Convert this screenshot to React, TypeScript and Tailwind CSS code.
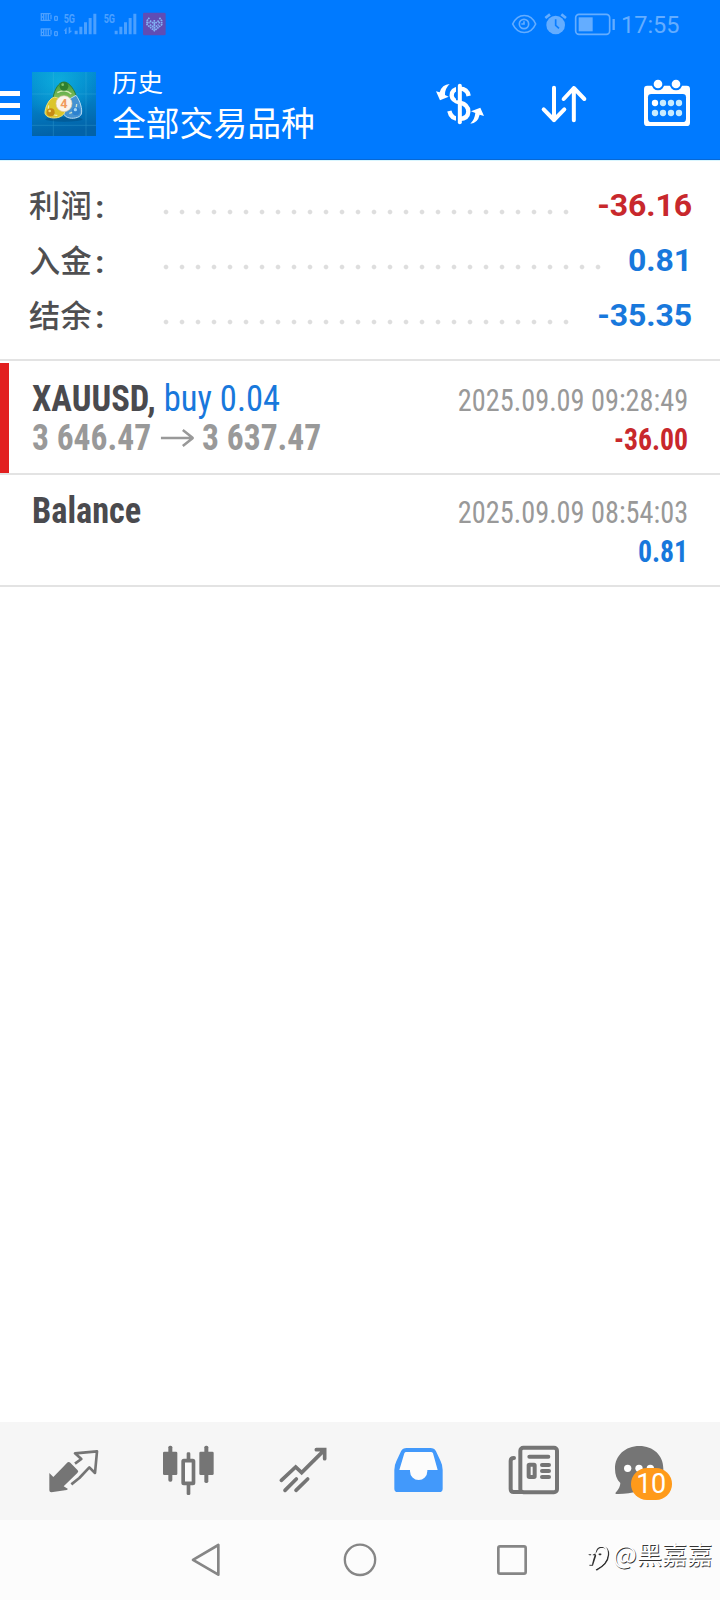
import React from "react";

const COND =
  "font-['Roboto_Condensed','Roboto'] [font-stretch:75%] whitespace-nowrap";

function StatusBar() {
  return (
    <div className="flex h-12 w-full text-[#64adff]">
      <svg className="ml-[36px] h-12 w-[134px]" viewBox="108 0 402 144" fill="currentColor">
        <g opacity=".75">
          {[40, 86].map((y) => (
            <g key={y} fill="none" stroke="currentColor" strokeWidth="4">
              <path d={`M124 ${y + 1}v20M124 ${y + 11}h6M131 ${y + 1}v20M138 ${y + 1}v21M145 ${y + 1}v20M153 ${y + 4}v14`} />
              <path d={`M122 ${y + 1}h30M122 ${y + 21}h30`} />
              <rect x="164" y={y + 9} width="8" height="12" rx="2" />
            </g>
          ))}
          <text x="191" y="69" fontSize="36" fontWeight="700" fontFamily="Roboto" textLength="34" lengthAdjust="spacingAndGlyphs">5G</text>
          <text x="311" y="69" fontSize="36" fontWeight="700" fontFamily="Roboto" textLength="34" lengthAdjust="spacingAndGlyphs">5G</text>
          <path d="M191 92l9-10v20h-5V92zM206 82v20l11-10h-6V82zM224 92h9v11h-9zM238 80h9v23h-9zM252 67h9v36h-9zM266 54h9v49h-9zM280 41h9v62h-9z" />
          <path d="M344 92h9v11h-9zM358 80h9v23h-9zM372 67h9v36h-9zM386 54h9v49h-9zM400 41h9v62h-9z" />
        </g>
        <rect x="429" y="38" width="68" height="68" rx="4" fill="#604db4" />
        <path d="M448 53l-7 9v12l22 18 22-18V62l-7-9M450 62l13 10 13-10M450 74l13 9 13-9M463 60v30M441 68l10 0M475 68h10" fill="none" stroke="#83b4f5" strokeWidth="5" strokeDasharray="5 2" />
      </svg>
      <svg className="ml-auto h-12 w-[109px]" viewBox="30 0 327 144" fill="none" stroke="currentColor" strokeWidth="5">
        <path d="M38 72C54 38 92 38 107 72C92 106 54 106 38 72Z" />
        <circle cx="72" cy="72" r="14" />
        <path d="M72 64v8h-8" />
        <circle cx="167" cy="75" r="28" fill="currentColor" stroke="none" />
        <path d="M167 58v18l10 9" stroke="#0a7dff" />
        <path d="M136 54l14-11M198 54l-14-11" strokeWidth="8" />
        <rect x="227" y="43" width="102" height="60" rx="10" />
        <rect x="236" y="52" width="42" height="42" fill="currentColor" stroke="none" />
        <path d="M341 57v33" strokeWidth="7" />
      </svg>
      <div className="w-[101px] pl-[2px] font-['Roboto'] text-[23.5px] leading-[50px]">17:55</div>
    </div>
  );
}

function AppLogo() {
  return (
    <svg className="ml-3 h-16 w-16" viewBox="96 36 192 192">
      <defs>
        <linearGradient id="sea" x1="0" y1="0" x2=".15" y2="1">
          <stop offset="0" stopColor="#0391d4" />
          <stop offset=".5" stopColor="#0280c6" />
          <stop offset="1" stopColor="#0262a8" />
        </linearGradient>
        <radialGradient id="glow" cx=".42" cy=".15" r=".6">
          <stop offset="0" stopColor="#10b4e0" stopOpacity=".8" />
          <stop offset="1" stopColor="#10b4e0" stopOpacity="0" />
        </radialGradient>
        <linearGradient id="green" x1="0" y1="0" x2="0" y2="1">
          <stop offset="0" stopColor="#3f9a3a" />
          <stop offset="1" stopColor="#a3cf6a" />
        </linearGradient>
      </defs>
      <rect x="96" y="36" width="192" height="192" fill="url(#sea)" />
      <rect x="96" y="36" width="192" height="192" fill="url(#glow)" />
      <path d="M160 36v192M96 102h192M96 196h192M258 36v192" stroke="#5ac4ea" strokeWidth="2" opacity=".35" />
      <ellipse cx="192" cy="178" rx="56" ry="7" fill="#023d66" opacity=".35" />
      <path d="M192 66C208 66 226 92 229 112C228 130 212 138 192 138C172 138 158 126 160 110C163 90 176 66 192 66Z" fill="url(#green)" stroke="#2c7c3c" strokeWidth="3" />
      <path d="M228 106C240 122 248 148 244 162C240 174 216 178 202 172C186 166 184 140 196 124Z" fill="#4593d2" stroke="#b8dcf4" strokeWidth="3" />
      <path d="M164 112C176 112 192 126 196 144C198 160 186 170 172 173C156 176 138 172 135 160C134 144 148 112 164 112Z" fill="#dcc52a" stroke="#efe07a" strokeWidth="3" />
      <path d="M172 98a34 34 0 0 1 42 4M208 160a28 28 0 0 0 22-28M146 136a24 24 0 0 0 26 30" fill="none" stroke="#f0f6d0" strokeWidth="4" opacity=".8" />
      <circle cx="192" cy="79" r="13" fill="#2f7f2e" />
      <circle cx="188" cy="74" r="4" fill="#83c66a" />
      <circle cx="152" cy="157" r="12" fill="#c68a14" />
      <circle cx="149" cy="153" r="4" fill="#f6dc70" />
      <circle cx="228" cy="154" r="12" fill="#2c82cf" />
      <circle cx="226" cy="149" r="5" fill="#a5d8f8" />
      <circle cx="192" cy="131" r="24" fill="#fbf3ea" stroke="#d9c7a0" strokeWidth="2" />
      <text x="192" y="145" textAnchor="middle" fontSize="38" fontWeight="700" fontFamily="Roboto" fill="#f09a5c">4</text>
    </svg>
  );
}

function Header() {
  return (
    <header className="h-[160px] w-full border-b border-[#0868d4] bg-[#007aff]">
      <StatusBar />
      <div className="flex h-[111px] w-full pt-6 text-white">
        <div className="flex h-16 w-5 flex-col gap-[7px] pt-[19px]">
          <div className="h-[5px] bg-white" />
          <div className="h-[5px] bg-white" />
          <div className="h-[5px] bg-white" />
        </div>
        <AppLogo />
        <div className="ml-4 -mt-[10px] w-[300px] font-['Noto_Sans_CJK_SC',sans-serif]">
          <div className="text-[25.5px] leading-[38px]">历史</div>
          <div className="text-[33.8px] leading-[43px]">全部交易品种</div>
        </div>
        <svg className="ml-[16px] mt-[8px] h-12 w-16" viewBox="24 60 192 144" fill="none" stroke="white">
          <path d="M146 108Q142 86 119 86Q95 87 95 107Q96 122 120 128Q145 134 145 155Q144 176 119 177Q93 177 88 153" strokeWidth="13" />
          <path d="M112 72V121M112 140V191" stroke="#007aff" strokeWidth="8" />
          <path d="M119.500 77V187" strokeWidth="12" strokeLinecap="round" />
          <path d="M89 72Q66 73 59 97L48 94L60 121L86 110L75 105Q74 86 89 72Z" fill="white" stroke="none" />
          <path d="M151 191Q173 190 179 164L192 168L181 143L153 154L166 159Q164 179 151 191Z" fill="white" stroke="none" />
        </svg>
        <svg className="ml-[46px] mt-[8px] h-12 w-[52px]" viewBox="354 60 156 144" fill="none" stroke="white" strokeWidth="12" strokeLinecap="round" strokeLinejoin="round">
          <path d="M402 83V181M371 148L402 180L433 148M461.500 181V84M431 117L461.500 84L493 117" />
        </svg>
        <svg className="ml-[52px] mt-[4px] h-[52px] w-[52px]" viewBox="666 48 156 156">
          <rect x="672" y="77" width="138" height="121" rx="10" fill="white" />
          <rect x="684" y="102" width="114" height="84" rx="10" fill="#007aff" />
          <g fill="white" stroke="#007aff" strokeWidth="6">
            <circle cx="714" cy="72" r="16" />
            <circle cx="768" cy="72" r="16" />
          </g>
          {[705, 729, 753, 777].map((x) => (
            <g key={x} fill="#c8ecff">
              <circle cx={x} cy="129" r="9.500" fill={x < 720 ? "white" : "#c8ecff"} />
              <circle cx={x} cy="159" r="9.500" />
            </g>
          ))}
        </svg>
      </div>
    </header>
  );
}

const DOTS =
  "h-4 bg-[radial-gradient(circle_at_8px_8px,#dedede_1.8px,transparent_2.8px)] bg-[length:16px_16px] bg-repeat-x";

function SummaryRow({ label, value, dots, color }: { label: string; value: string; dots: string; color: string }) {
  return (
    <div className="flex h-[55px] w-full items-center">
      <div className="-mt-[4px] flex w-[128.500px] items-center font-['Noto_Sans_CJK_SC',sans-serif] text-[31.2px] font-medium leading-[55px] tracking-[0.4px] text-[#4f4f51]">
        {label}
        <span className="ml-[3px] mt-[7px] font-['Roboto'] text-[32px] font-bold">:</span>
      </div>
      <div className={`${DOTS} ${dots} mt-[13px]`} />
      <div className={`-mt-px ml-auto font-['Roboto'] text-[32px] font-bold leading-[55px] tracking-[-0.1px] ${color}`}>{value}</div>
    </div>
  );
}

function Candle() {
  return (
    <svg className="ml-[52px] h-[60px] w-[60px]" viewBox="384 96 180 180" fill="#757575">
      <rect x="399" y="125" width="43" height="70" rx="4" />
      <rect x="415" y="107" width="12" height="108" rx="5" />
      <rect x="508" y="125" width="43" height="70" rx="4" />
      <rect x="523" y="107" width="12" height="112" rx="5" />
      <rect x="470" y="127" width="11" height="24" rx="4" />
      <rect x="470" y="218" width="11" height="37" rx="4" />
      <rect x="459.500" y="152" width="31" height="68" rx="2" fill="#fafafa" stroke="#757575" strokeWidth="11" />
    </svg>
  );
}

function TabBar() {
  return (
    <nav className="flex h-[98px] w-full bg-[#f6f6f6] pl-[46px] pt-5">
      <svg className="h-[60px] w-[60px]" viewBox="48 96 180 180" fill="#757575">
        <path d="M58 189L70 201L113 157Q117 154 121 158L143 181Q147 185 142 189L101 229L114 237L110 240L64 247Q58 247 58 241Z" />
        <path d="M135 161L154 147L135 130L201 124L195 189L178 172L148 204L124 223" fill="none" stroke="#757575" strokeWidth="8" strokeLinejoin="round" />
      </svg>
      <Candle />
      <svg className="ml-[57px] h-[60px] w-[60px]" viewBox="735 96 180 180" fill="none" stroke="#757575" strokeWidth="11" strokeLinecap="round">
        <path d="M754 211L797 171L815 188L882 121M859 119H884V146M765 241L799 207M798 241L833 207" />
      </svg>
      <svg className="ml-[53px] h-[60px] w-[60px]" viewBox="54 96 180 180">
        <path d="M110 114H181Q193 114 198 124L212 154Q218 166 218 180V236Q218 246 208 246H83Q73 246 73 236V180Q73 166 79 154L93 124Q98 114 110 114Z" fill="#4299fb" />
        <path d="M108 126H183Q187 126 189 130L203 180H172V184A26 26 0 0 1 120 184V180H88L103 130Q105 126 108 126Z" fill="#fcfcfc" />
      </svg>
      <svg className="ml-[56px] h-[60px] w-[60px]" viewBox="402 96 180 180" fill="none" stroke="#757575" strokeWidth="12" strokeLinecap="round">
        <rect x="451" y="113.500" width="110" height="133" rx="9" />
        <path d="M432 144Q422 144 422 153V237Q422 246 431 246H456M478 140H535M516 165H537M516 183H537M516 201H537" />
        <rect x="476" y="164" width="18" height="37" rx="2" />
      </svg>
      <div className="relative ml-[46px] h-[60px] w-[70px]">
        <svg className="h-[60px] w-[70px]" viewBox="720 96 210 180">
          <path d="M808 108C850 108 880 136 880 176C880 216 850 245 806 243C785 249 760 253 738 252C735 251 736 249 738 247C746 238 751 228 751 219C740 208 735 194 735 176C735 136 766 108 808 108Z" fill="#757575" />
          <g fill="white">
            <circle cx="773" cy="175" r="11" />
            <circle cx="807" cy="175" r="11" />
            <circle cx="841" cy="175" r="11" />
          </g>
        </svg>
        <div className="absolute left-[21px] top-[26px] h-8 w-[41px] rounded-full bg-[#ff9a1a] pr-px text-center font-['Roboto'] text-[27px] leading-[33px] tracking-[-0.5px] text-white">10</div>
      </div>
    </nav>
  );
}

function SystemNav() {
  return (
    <div className="flex h-20 w-full bg-[#fcfcfc]">
      <svg className="ml-[186px] mt-5 h-10 w-10" viewBox="48 60 120 120" fill="none" stroke="#868686" strokeWidth="8" strokeLinejoin="round">
        <path d="M69 119.500L145 75V164Z" />
      </svg>
      <svg className="ml-[114px] mt-5 h-10 w-10" viewBox="510 60 120 120" fill="none" stroke="#868686" strokeWidth="7">
        <circle cx="570" cy="119.500" r="45.500" />
      </svg>
      <svg className="ml-[112px] mt-5 h-10 w-10" viewBox="966 60 120 120" fill="none" stroke="#868686" strokeWidth="8">
        <rect x="985" y="79" width="82" height="82" rx="5" />
      </svg>
      <div className="ml-[54px] mt-[11px] flex h-[44px] text-white">
        <svg className="ml-[2px] mt-[10px] h-8 w-[24px]" viewBox="54 66 72 96" fill="none" strokeWidth="5" strokeLinecap="round">
          <path d="M58 106H75M78 98Q82 84 98 84Q116 86 115 108Q113 135 80 152M76 110L67 138H60M88 106h4" stroke="#303030" />
          <path d="M56 103H72M76 95Q80 81 96 81Q113 84 111 106Q109 131 78 148M76 97L66 106L64 135H58" stroke="#fcfcfc" strokeWidth="5" />
        </svg>
        <span className="ml-[1px] whitespace-nowrap font-['Noto_Sans_CJK_SC',sans-serif] text-[25.200px] leading-[44px] [text-shadow:0.8px_0.9px_0.6px_#333]">@黑嘉嘉</span>
      </div>
    </div>
  );
}

export default function App() {
  return (
    <div className="flex h-[1600px] w-[720px] flex-col overflow-hidden bg-white">
      <Header />
      <section className="h-[199px] w-full border-t border-[#d8f6ff] pl-[29px] pr-[28px] pt-[17px]">
        <SummaryRow label="利润" value="-36.16" dots="w-[416px]" color="text-[#c8282c]" />
        <SummaryRow label="入金" value="0.81" dots="w-[448px]" color="text-[#1878dc]" />
        <SummaryRow label="结余" value="-35.35" dots="w-[416px]" color="text-[#1878dc]" />
      </section>
      <section className="w-full">
        <div className="flex h-[114px] w-full border-t-2 border-[#e3e3e3]">
          <div className="mt-[2px] h-[110px] w-[9px] bg-[#e21f1f]" />
          <div className="flex flex-1 justify-between pl-[23px] pr-[32px] pt-[18px]">
            <div className="w-[300px]">
              <div className={`${COND} origin-left scale-x-[0.922] text-[37.5px] leading-[39px] text-[#1878dc]`}>
                <span className="font-bold text-[#4a4a4e]">XAUUSD,</span> buy 0.04
              </div>
              <div className={`${COND} flex origin-left scale-x-[0.894] items-center text-[37.5px] font-bold leading-[39px] text-[#999]`}>
                3 646.47
                <svg className="ml-[11px] mr-[9px] h-[18px] w-[37px] shrink-0" viewBox="0 0 33 18" preserveAspectRatio="none" fill="none" stroke="#999" strokeWidth="2.500">
                  <path d="M0 9H32M22 1L32 9L22 17" />
                </svg>
                3 637.47
              </div>
            </div>
            <div className="pt-[2px] text-right">
              <div className={`${COND} origin-right scale-x-[0.928] text-[30.5px] leading-[39px] text-[#999]`}>2025.09.09 09:28:49</div>
              <div className={`${COND} origin-right scale-x-[0.91] text-[30.5px] font-bold leading-[39px] text-[#c8282c]`}>-36.00</div>
            </div>
          </div>
        </div>
        <div className="flex h-[114px] w-full justify-between border-y-2 border-[#e3e3e3] pl-[32px] pr-[32px] pt-[16px]">
          <div className={`${COND} origin-left scale-x-[0.914] text-[37.5px] font-bold leading-[39px] text-[#4a4a4e]`}>Balance</div>
          <div className="pt-[2px] text-right">
            <div className={`${COND} origin-right scale-x-[0.928] text-[30.5px] leading-[39px] text-[#999]`}>2025.09.09 08:54:03</div>
            <div className={`${COND} origin-right scale-x-[0.91] text-[30.5px] font-bold leading-[39px] text-[#1878dc]`}>0.81</div>
          </div>
        </div>
      </section>
      <div className="flex-1" />
      <TabBar />
      <SystemNav />
    </div>
  );
}
